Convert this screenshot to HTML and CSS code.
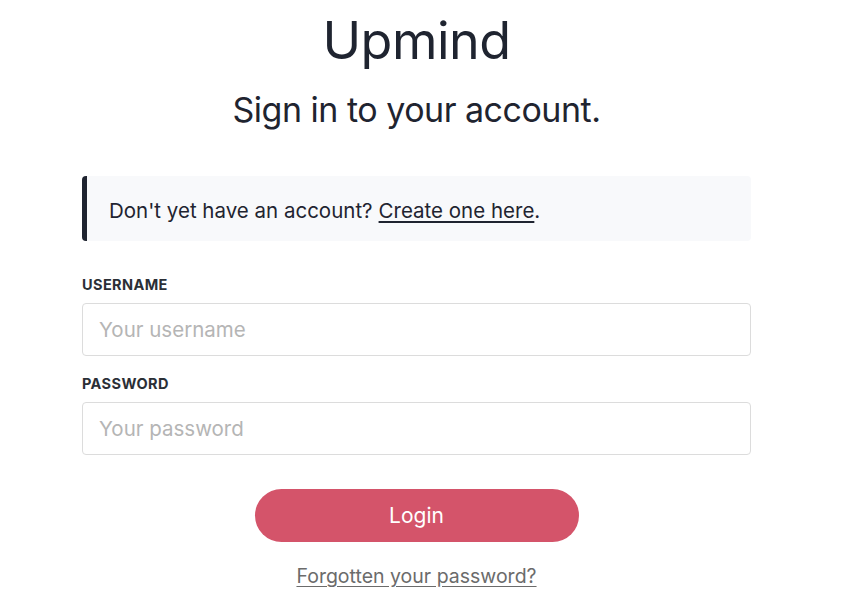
FILE: index.html
```html
<!DOCTYPE html>
<html lang="en">
<head>
<meta charset="utf-8">
<title>Upmind - Sign in</title>
<link rel="stylesheet" href="styles.css">
</head>
<body>
<main class="page">
  <header class="head">
    <h1 class="brand">Upmind</h1>
    <h2 class="subtitle">Sign in to your account.</h2>
  </header>
  <div class="notice">Don't yet have an account? <a href="#" class="notice-link">Create one here</a>.</div>
  <form class="form">
    <label class="field">
      <span class="label">USERNAME</span>
      <input class="input" type="text" placeholder="Your username">
    </label>
    <label class="field">
      <span class="label">PASSWORD</span>
      <input class="input" type="password" placeholder="Your password">
    </label>
    <div class="actions">
      <button class="btn" type="button">Login</button>
      <a href="#" class="forgot">Forgotten your password?</a>
    </div>
  </form>
</main>
</body>
</html>
```
FILE: styles.css
```css
* { box-sizing: border-box; }
html, body { margin: 0; padding: 0; background: #ffffff; }
body {
  font-family: Inter, "Noto Sans", sans-serif;
  color: #1f2430;
}
.page {
  width: 669px;
  margin-left: 82px;
  display: flex;
  flex-direction: column;
}
.head {
  display: flex;
  flex-direction: column;
  align-items: center;
}
.brand {
  margin: 0;
  font-size: 52px;
  font-weight: 400;
  line-height: 1;
  padding-top: 15px;
  letter-spacing: -0.5px;
  color: #1f2430;
}
.subtitle {
  margin: 0;
  margin-top: 26px;
  font-size: 34px;
  font-weight: 400;
  line-height: 1;
  letter-spacing: -0.5px;
  color: #1f2430;
}
.notice {
  margin-top: 49px;
  height: 65px;
  background: #f8f9fb;
  border-left: 5px solid #1f2430;
  border-radius: 4px;
  padding-left: 22px;
  padding-top: 3px;
  display: flex;
  align-items: center;
  font-size: 20.5px;
  color: #1f2430;
}
.notice-link {
  color: #1f2430;
  text-decoration: underline;
  text-decoration-thickness: 2px;
  text-underline-offset: 3px;
  margin-left: 6px;
}
.form {
  margin-top: 36px;
  display: flex;
  flex-direction: column;
  gap: 20px;
}
.field {
  display: flex;
  flex-direction: column;
  gap: 10px;
}
.label {
  font-size: 14.5px;
  font-weight: 700;
  letter-spacing: 0.4px;
  color: #2b2f36;
  line-height: 16px;
}
.input {
  height: 53px;
  width: 100%;
  border: 1px solid #dcdcdc;
  border-radius: 4px;
  padding: 0 16px;
  font-family: Inter, "Noto Sans", sans-serif;
  font-size: 20.5px;
  color: #1f2430;
  background: #fff;
}
.input::placeholder { color: #b5b5b5; }
.actions {
  margin-top: 14px;
  display: flex;
  flex-direction: column;
  align-items: center;
}
.btn {
  width: 324px;
  height: 53px;
  border: 0;
  border-radius: 27px;
  background: #d4546a;
  color: #ffffff;
  font-family: Inter, "Noto Sans", sans-serif;
  font-size: 21px;
}
.forgot {
  margin-top: 22px;
  font-size: 19.5px;
  color: #6b6b6b;
  text-decoration: underline;
  text-underline-offset: 3px;
}
```
